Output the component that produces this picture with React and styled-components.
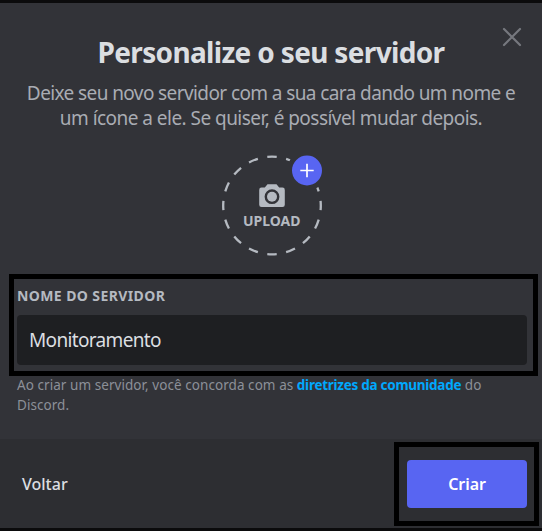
import React from "react";
import styled, { createGlobalStyle } from "styled-components";

const GlobalStyle = createGlobalStyle`
  * { box-sizing: border-box; }
  body { margin: 0; background: #0b0b0c; font-family: "Noto Sans", sans-serif; }
`;

const Page = styled.div`
  height: 531px;
  padding: 3px 0;
  background: #0b0b0c;
  overflow: hidden;
`;

const Modal = styled.section`
  position: relative;
  display: flex;
  flex-direction: column;
  height: 525px;
  background: #323338;
`;

const CloseButton = styled.button`
  position: absolute;
  top: 22px;
  right: 18px;
  width: 24px;
  height: 24px;
  padding: 0;
  border: 0;
  background: none;
  color: #76787e;

  svg { display: block; }
`;

const Header = styled.header`
  height: 152px;
  padding-top: 30px;
  text-align: center;
`;

const Title = styled.h1`
  margin: 0;
  font-size: 28px;
  font-weight: 700;
  line-height: 38px;
  letter-spacing: -0.66px;
  color: #dbdee1;
`;

const Description = styled.p`
  margin: 10px 0 0;
  font-size: 19px;
  line-height: 25px;
  color: #a9acb3;
`;

const Line = styled.span`
  display: block;
  white-space: nowrap;
  letter-spacing: ${(p) => p.$tracking}px;
`;

const Upload = styled.div`
  display: flex;
  justify-content: center;
  height: 119px;
  padding-left: 2px;

  svg { display: block; width: 104px; height: 104px; }
  text { font: 700 14.3px "Noto Sans", sans-serif; fill: #b5bac1; }
`;

const Highlight = styled.div`
  flex: none;
  border: 5px solid #000;
`;

const FieldHighlight = styled(Highlight)`
  height: 102px;
  margin: 0 4px 0 9px;
  padding: 7px 6px 0 3px;
`;

const Label = styled.label`
  display: block;
  margin-bottom: 9px;
  font-size: 14px;
  font-weight: 700;
  line-height: 20px;
  letter-spacing: 0.4px;
  color: #b5bac1;
`;

const Input = styled.input`
  display: block;
  width: 510px;
  height: 50px;
  padding: 0 12px;
  border: 0;
  border-radius: 4px;
  outline: 0;
  background: #1e1f22;
  color: #dbdee1;
  font: 19px "Noto Sans", sans-serif;
  letter-spacing: -0.66px;
`;

const Notice = styled.p`
  margin: -1px 17px 0;
  font-size: 13.5px;
  line-height: 20px;
  color: #8c9098;
  white-space: nowrap;
`;

const GuidelinesLink = styled.a`
  color: #00a8fc;
  font-weight: 700;
  letter-spacing: -0.27px;
`;

const Footer = styled.footer`
  display: flex;
  align-items: flex-start;
  justify-content: space-between;
  height: 89px;
  margin-top: auto;
  padding: 3px 3px 0 22px;
  background: #2d2e32;
`;

const BackButton = styled.button`
  height: 84px;
  padding: 0;
  border: 0;
  background: none;
  color: #dbdee1;
  font: 500 16px "Noto Sans", sans-serif;
`;

const ActionHighlight = styled(Highlight)`
  width: 145px;
  height: 84px;
  padding: 13px 7px 0 8px;
`;

const CreateButton = styled.button`
  display: block;
  width: 120px;
  height: 48px;
  padding: 0;
  border: 0;
  border-radius: 4px;
  background: #5865f2;
  color: #fff;
  font: 600 16px "Noto Sans", sans-serif;
  letter-spacing: -0.1px;
`;

const CloseIcon = () => (
  <svg width="24" height="24" viewBox="0 0 24 24" fill="none" stroke="currentColor" strokeWidth="2.2" strokeLinecap="round">
    <path d="M4 4 20 20M20 4 4 20" />
  </svg>
);

const UploadIcon = () => (
  <svg viewBox="220 155 104 104" role="img" aria-label="Upload">
    <defs>
      <mask id="badge-gap" maskUnits="userSpaceOnUse" x="220" y="153" width="104" height="105">
        <rect x="220" y="153" width="104" height="105" fill="#fff" />
        <circle cx="307" cy="170.5" r="20" fill="#000" />
      </mask>
    </defs>
    <g mask="url(#badge-gap)">
      <circle cx="272" cy="205.5" r="48.8" fill="none" stroke="#b5bac1" strokeWidth="2.3"
        pathLength="320" strokeDasharray="10 10" strokeDashoffset="5" />
    </g>
    <path fill="#b5bac1" fillRule="evenodd" d="M267.5 184.2h9l2.7 3.4h3.3a2.3 2.3 0 0 1 2.3 2.3v14.8a2.3 2.3 0 0 1-2.3 2.3h-21a2.3 2.3 0 0 1-2.3-2.3v-14.8a2.3 2.3 0 0 1 2.3-2.3h3.3ZM272 189.3a7.4 7.4 0 1 0 0 14.8 7.4 7.4 0 0 0 0-14.8Z" />
    <circle cx="272" cy="196.7" r="5" fill="#b5bac1" />
    <text x="243" y="225.6" textLength="57.5" lengthAdjust="spacingAndGlyphs">UPLOAD</text>
    <circle cx="307" cy="170.5" r="15" fill="#5865f2" />
    <path d="M300.3 170.5h13.4M307 163.8v13.4" stroke="#fff" strokeWidth="1.7" />
  </svg>
);

export default function App() {
  return (
    <>
      <GlobalStyle />
      <Page>
        <Modal>
          <CloseButton aria-label="Fechar"><CloseIcon /></CloseButton>
          <Header>
            <Title>Personalize o seu servidor</Title>
            <Description>
              <Line $tracking={-0.6}>Deixe seu novo servidor com a sua cara dando um nome e</Line>
              <Line $tracking={-0.54}>um ícone a ele. Se quiser, é possível mudar depois.</Line>
            </Description>
          </Header>
          <Upload><UploadIcon /></Upload>
          <FieldHighlight>
            <Label htmlFor="server-name">NOME DO SERVIDOR</Label>
            <Input id="server-name" defaultValue="Monitoramento" />
          </FieldHighlight>
          <Notice>
            <Line $tracking={0.06}>Ao criar um servidor, você concorda com as <GuidelinesLink>diretrizes da comunidade</GuidelinesLink> do</Line>
            <Line $tracking={0.06}>Discord.</Line>
          </Notice>
          <Footer>
            <BackButton>Voltar</BackButton>
            <ActionHighlight><CreateButton>Criar</CreateButton></ActionHighlight>
          </Footer>
        </Modal>
      </Page>
    </>
  );
}
